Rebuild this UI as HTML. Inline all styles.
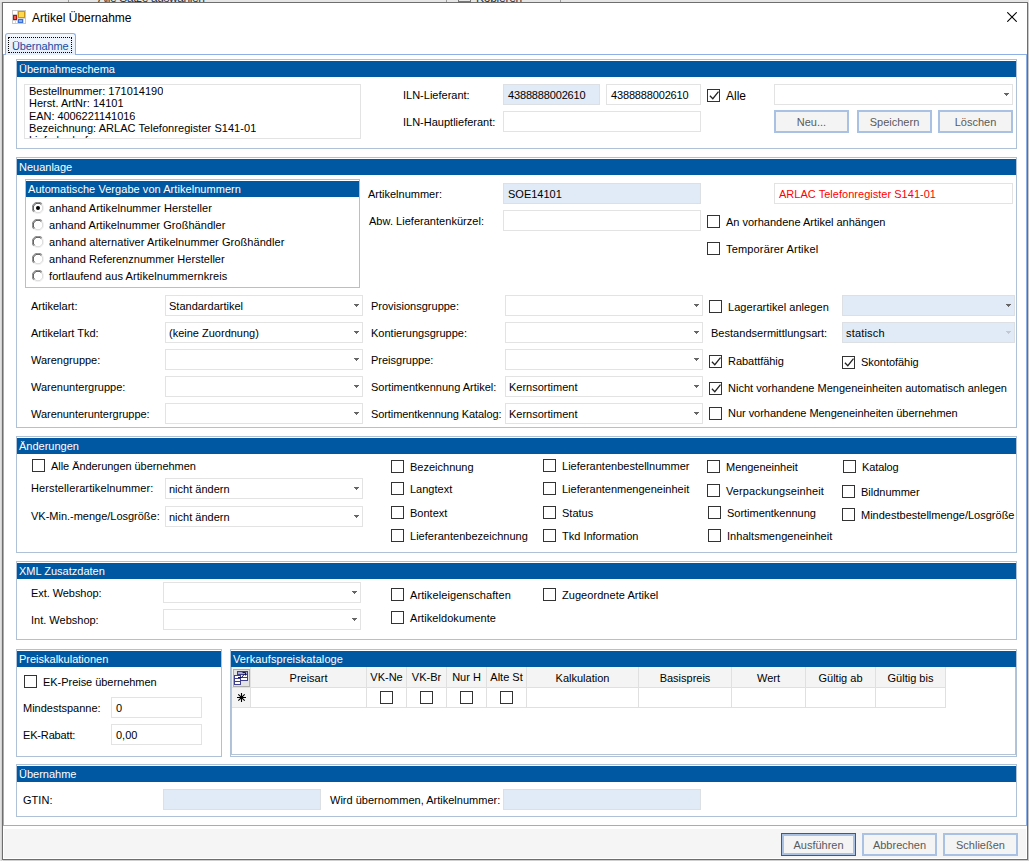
<!DOCTYPE html>
<html lang="de"><head><meta charset="utf-8"><title>Artikel Übernahme</title>
<style>
html,body{margin:0;padding:0;background:#fff;}
body{width:1029px;height:861px;position:relative;overflow:hidden;font-family:"Liberation Sans",sans-serif;font-size:11px;color:#000;}
.abs,.t,.grp,.hdr,.fld,.cb,.btn,.gh,.gc{position:absolute;box-sizing:content-box;}
.t{white-space:nowrap;font-size:11px;}
.t.w{color:#fff;}
.t.title{font-size:12px;}
.t.tabt{color:#1c4aa0;}
.grp{border:1px solid #afc1d7;background:#fff;}
.hdr{background:#0058a2;}
.fld{border:1px solid #e3e3e3;background:#fff;}
.fld.fill{background:#e1eaf7;border-color:#dcdfe4;}
.cb{border:1px solid #333;background:#fff;}
.btn{border:2px solid #a9c1e2;background:#f4f4f4;color:#5a5a5a;text-align:center;}
.btn.def{border:1px solid #565656;box-shadow:inset 0 0 0 2px #a9c1e2;padding:1px;}
.btn .bt{display:block;font-size:11px;line-height:20px;height:19px;}
.tab{border:1px solid #8fb0e6;border-bottom:none;border-radius:3px 3px 0 0;background:linear-gradient(#f3f7fd,#e4edfa);}
.gh{background:#f4f4f4;border-right:1px solid #e0e0e0;border-bottom:1px solid #e0e0e0;box-sizing:border-box;text-align:center;font-size:11px;white-space:nowrap;overflow:hidden;}
.gc{background:#fff;border-right:1px solid #e0e0e0;border-bottom:1px solid #e0e0e0;box-sizing:border-box;}
.gc.rh{background:#f4f4f4;}
</style></head>
<body>
<div class="abs" style="left:0;top:0;width:1029px;height:861px;background:#e6e6e6;overflow:hidden" id="bgw"><div class="abs" style="left:0;top:2px;width:1px;height:859px;background:#e1e1e1"></div><div class="abs" style="left:1px;top:2px;width:1px;height:859px;background:#d2d2d2"></div><div class="abs" style="left:68px;top:0;width:1px;height:2px;background:#9a9a9a"></div><div class="abs" style="left:446px;top:0;width:1px;height:2px;background:#9a9a9a"></div><div class="abs" style="left:560px;top:0;width:1px;height:2px;background:#9a9a9a"></div><div class="abs" style="left:458px;top:0;width:11px;height:1px;border:1px solid #777;border-top:none"></div></div>
<span id="t1" class="t title" style="left:98px;top:-9.5px;height:14px;line-height:14px;color:#333;letter-spacing:-0.408px;">Alle Sätze auswählen</span>
<span id="t2" class="t title" style="left:476px;top:-9.5px;height:14px;line-height:14px;color:#333;letter-spacing:-0.256px;">Kopieren</span>
<div class="abs" style="left:2px;top:2px;width:1024px;height:856px;border:1px solid #6e6e6e;background:#fff"></div>
<div class="abs" style="left:1028px;top:3px;width:1px;height:858px;background:#c8c8c8"></div>
<div class="abs" style="left:3px;top:860px;width:1026px;height:1px;background:#cfcfcf"></div>
<div class="abs" style="left:4px;top:829px;width:1022px;height:29px;background:#f5f5f5"></div>
<svg class="abs" style="left:12px;top:10px" width="14" height="14" viewBox="0 0 14 14"><rect x="0.5" y="0.5" width="13" height="13" fill="#fff" stroke="#c9c9c9"/><rect x="6" y="1" width="7" height="7" fill="#c89612"/><rect x="7" y="2" width="5" height="5" fill="#ffd84d"/><rect x="1" y="5" width="4" height="5" fill="#a51309"/><rect x="2" y="6" width="2" height="3" fill="#ec5d55"/><rect x="6" y="9" width="5" height="4" fill="#3a6fd8"/><rect x="7" y="10" width="3" height="2" fill="#86aef5"/><rect x="5" y="1" width="1" height="12" fill="#cfcfcf"/><rect x="1" y="4" width="4" height="1" fill="#cfcfcf"/><rect x="1" y="10" width="4" height="1" fill="#cfcfcf"/><rect x="6" y="8" width="7" height="1" fill="#d6d6d6"/><rect x="11" y="9" width="1" height="4" fill="#d6d6d6"/><rect x="3" y="11" width="1" height="2" fill="#d6d6d6"/></svg>
<span id="t3" class="t title" style="left:32px;top:9.5px;height:16px;line-height:16px;letter-spacing:0.007px;">Artikel Übernahme</span>
<svg class="abs" style="left:1007px;top:12px" width="10" height="10" viewBox="0 0 10 10"><path d="M0.3 0.3L9.7 9.7M9.7 0.3L0.3 9.7" stroke="#000" stroke-width="1.1"/></svg>
<div class="abs" style="left:3px;top:54px;width:1022px;height:770px;border:1px solid #8fb0e6;background:#fff"></div>
<div class="abs tab" style="left:5px;top:33px;width:69px;height:21px"></div>
<div class="abs" style="left:8px;top:37px;width:62px;height:14px;border:1px dotted #000"></div>
<span id="t4" class="t tabt" style="left:12px;top:38.5px;height:14px;line-height:14px;letter-spacing:-0.109px;">Übernahme</span>
<div class="grp" style="left:16px;top:59px;width:999px;height:88px;"></div>
<div class="hdr" style="left:17px;top:61px;width:999px;height:16px;"></div>
<span id="t5" class="t w" style="left:19px;top:62px;height:14px;line-height:14px;letter-spacing:0.000px;">Übernahmeschema</span>
<div class="fld" style="left:24px;top:84px;width:335px;height:53px;overflow:hidden"></div>
<span id="t6" class="t " style="left:29px;top:85px;height:13px;line-height:13px;letter-spacing:-0.010px;clip-path:inset(0 0 0px 0);">Bestellnummer: 171014190</span>
<span id="t7" class="t " style="left:29px;top:97px;height:13px;line-height:13px;letter-spacing:0.023px;clip-path:inset(0 0 0px 0);">Herst. ArtNr: 14101</span>
<span id="t8" class="t " style="left:29px;top:110px;height:13px;line-height:13px;letter-spacing:-0.064px;clip-path:inset(0 0 0px 0);">EAN: 4006221141016</span>
<span id="t9" class="t " style="left:29px;top:122px;height:13px;line-height:13px;letter-spacing:0.044px;clip-path:inset(0 0 0px 0);">Bezeichnung: ARLAC Telefonregister S141-01</span>
<span id="t10" class="t " style="left:29px;top:134px;height:13px;line-height:13px;clip-path:inset(0 0 9px 0);">Lieferbedarf:</span>
<span id="t11" class="t " style="left:403px;top:88px;height:14px;line-height:14px;">ILN-Lieferant:</span>
<span id="t12" class="t " style="left:403px;top:115px;height:14px;line-height:14px;">ILN-Hauptlieferant:</span>
<div class="fld fill" style="left:503px;top:84px;width:95px;height:19px;"></div>
<span id="t13" class="t " style="left:508px;top:87.5px;height:14px;line-height:14px;letter-spacing:-0.156px;">4388888002610</span>
<div class="fld" style="left:606px;top:84px;width:93px;height:19px;"></div>
<span id="t14" class="t " style="left:611px;top:87.5px;height:14px;line-height:14px;letter-spacing:-0.156px;">4388888002610</span>
<div class="fld" style="left:503px;top:111px;width:196px;height:19px;"></div>
<div class="cb" style="left:707px;top:89px;width:11px;height:11px;"><svg width="13" height="13" viewBox="0 0 13 13" style="position:absolute;left:-1px;top:-1px"><path d="M2.9 6.8 L5.8 9.7 L11.5 2.6" fill="none" stroke="#222" stroke-width="1.25"/></svg></div>
<span id="t15" class="t " style="font-size:12px;left:726px;top:88.5px;height:14px;line-height:14px;">Alle</span>
<div class="fld" style="left:774px;top:84px;width:237px;height:19px;"></div>
<svg class="abs" style="left:1004px;top:93px" width="5" height="3" viewBox="0 0 5 3"><path d="M0 0h5v1h-1v1h-1v1h-1v-1h-1v-1h-1z" fill="#666"/></svg>
<div class="btn" style="left:774px;top:110px;width:71px;height:19px;"><span class="bt">Neu...</span></div>
<div class="btn" style="left:857px;top:110px;width:71px;height:19px;"><span class="bt">Speichern</span></div>
<div class="btn" style="left:938px;top:110px;width:71px;height:19px;"><span class="bt">Löschen</span></div>
<div class="grp" style="left:16px;top:157px;width:999px;height:269px;"></div>
<div class="hdr" style="left:17px;top:159px;width:999px;height:16px;"></div>
<span id="t16" class="t w" style="left:19px;top:160px;height:14px;line-height:14px;">Neuanlage</span>
<div class="grp" style="left:25px;top:179px;width:333px;height:107px;"></div>
<div class="hdr" style="left:26px;top:181px;width:333px;height:16px;"></div>
<span id="t17" class="t w" style="left:28px;top:182px;height:14px;line-height:14px;letter-spacing:0.052px;">Automatische Vergabe von Artikelnummern</span>
<svg class="abs" style="left:31.5px;top:201.5px" width="12" height="12" viewBox="0 0 12 12"><circle cx="6" cy="6" r="5.5" fill="#fff"/><path d="M1.8 10.2 A5.6 5.6 0 0 1 10.2 1.8" fill="none" stroke="#808080" stroke-width="1"/><path d="M2.6 9.4 A4.6 4.6 0 0 1 9.4 2.6" fill="none" stroke="#404040" stroke-width="1"/><path d="M10.2 1.8 A5.6 5.6 0 0 1 1.8 10.2" fill="none" stroke="#f4f4f4" stroke-width="1"/><path d="M9.4 2.6 A4.6 4.6 0 0 1 2.6 9.4" fill="none" stroke="#d8d8d8" stroke-width="1"/><circle cx="6" cy="6" r="2" fill="#000"/></svg>
<span id="t18" class="t " style="left:49px;top:200.5px;height:14px;line-height:14px;letter-spacing:0.088px;">anhand Artikelnummer Hersteller</span>
<svg class="abs" style="left:31.5px;top:218.5px" width="12" height="12" viewBox="0 0 12 12"><circle cx="6" cy="6" r="5.5" fill="#fff"/><path d="M1.8 10.2 A5.6 5.6 0 0 1 10.2 1.8" fill="none" stroke="#808080" stroke-width="1"/><path d="M2.6 9.4 A4.6 4.6 0 0 1 9.4 2.6" fill="none" stroke="#404040" stroke-width="1"/><path d="M10.2 1.8 A5.6 5.6 0 0 1 1.8 10.2" fill="none" stroke="#f4f4f4" stroke-width="1"/><path d="M9.4 2.6 A4.6 4.6 0 0 1 2.6 9.4" fill="none" stroke="#d8d8d8" stroke-width="1"/></svg>
<span id="t19" class="t " style="left:49px;top:217.5px;height:14px;line-height:14px;letter-spacing:0.051px;">anhand Artikelnummer Großhändler</span>
<svg class="abs" style="left:31.5px;top:235.5px" width="12" height="12" viewBox="0 0 12 12"><circle cx="6" cy="6" r="5.5" fill="#fff"/><path d="M1.8 10.2 A5.6 5.6 0 0 1 10.2 1.8" fill="none" stroke="#808080" stroke-width="1"/><path d="M2.6 9.4 A4.6 4.6 0 0 1 9.4 2.6" fill="none" stroke="#404040" stroke-width="1"/><path d="M10.2 1.8 A5.6 5.6 0 0 1 1.8 10.2" fill="none" stroke="#f4f4f4" stroke-width="1"/><path d="M9.4 2.6 A4.6 4.6 0 0 1 2.6 9.4" fill="none" stroke="#d8d8d8" stroke-width="1"/></svg>
<span id="t20" class="t " style="left:49px;top:234.5px;height:14px;line-height:14px;letter-spacing:0.070px;">anhand alternativer Artikelnummer Großhändler</span>
<svg class="abs" style="left:31.5px;top:252.5px" width="12" height="12" viewBox="0 0 12 12"><circle cx="6" cy="6" r="5.5" fill="#fff"/><path d="M1.8 10.2 A5.6 5.6 0 0 1 10.2 1.8" fill="none" stroke="#808080" stroke-width="1"/><path d="M2.6 9.4 A4.6 4.6 0 0 1 9.4 2.6" fill="none" stroke="#404040" stroke-width="1"/><path d="M10.2 1.8 A5.6 5.6 0 0 1 1.8 10.2" fill="none" stroke="#f4f4f4" stroke-width="1"/><path d="M9.4 2.6 A4.6 4.6 0 0 1 2.6 9.4" fill="none" stroke="#d8d8d8" stroke-width="1"/></svg>
<span id="t21" class="t " style="left:49px;top:251.5px;height:14px;line-height:14px;letter-spacing:0.026px;">anhand Referenznummer Hersteller</span>
<svg class="abs" style="left:31.5px;top:269.5px" width="12" height="12" viewBox="0 0 12 12"><circle cx="6" cy="6" r="5.5" fill="#fff"/><path d="M1.8 10.2 A5.6 5.6 0 0 1 10.2 1.8" fill="none" stroke="#808080" stroke-width="1"/><path d="M2.6 9.4 A4.6 4.6 0 0 1 9.4 2.6" fill="none" stroke="#404040" stroke-width="1"/><path d="M10.2 1.8 A5.6 5.6 0 0 1 1.8 10.2" fill="none" stroke="#f4f4f4" stroke-width="1"/><path d="M9.4 2.6 A4.6 4.6 0 0 1 2.6 9.4" fill="none" stroke="#d8d8d8" stroke-width="1"/></svg>
<span id="t22" class="t " style="left:49px;top:268.5px;height:14px;line-height:14px;letter-spacing:0.084px;">fortlaufend aus Artikelnummernkreis</span>
<span id="t23" class="t " style="left:368px;top:187px;height:14px;line-height:14px;">Artikelnummer:</span>
<span id="t24" class="t " style="left:369px;top:214px;height:14px;line-height:14px;letter-spacing:0.028px;">Abw. Lieferantenkürzel:</span>
<div class="fld fill" style="left:503px;top:183px;width:196px;height:19px;"></div>
<span id="t25" class="t " style="left:508px;top:186.5px;height:14px;line-height:14px;">SOE14101</span>
<div class="fld" style="left:503px;top:210px;width:196px;height:19px;"></div>
<div class="fld" style="left:774px;top:183px;width:237px;height:19px;"></div>
<span id="t26" class="t " style="left:779px;top:186.5px;height:14px;line-height:14px;color:#f00;letter-spacing:0.023px;">ARLAC Telefonregister S141-01</span>
<div class="cb" style="left:707px;top:215px;width:11px;height:11px;"></div>
<span id="t27" class="t " style="left:726px;top:214.5px;height:14px;line-height:14px;letter-spacing:-0.008px;">An vorhandene Artikel anhängen</span>
<div class="cb" style="left:707px;top:242px;width:11px;height:11px;"></div>
<span id="t28" class="t " style="left:726px;top:241.5px;height:14px;line-height:14px;letter-spacing:0.169px;">Temporärer Artikel</span>
<span id="t29" class="t " style="left:31px;top:299px;height:14px;line-height:14px;">Artikelart:</span>
<div class="fld" style="left:165px;top:295px;width:196px;height:19px;"></div>
<svg class="abs" style="left:354px;top:304px" width="5" height="3" viewBox="0 0 5 3"><path d="M0 0h5v1h-1v1h-1v1h-1v-1h-1v-1h-1z" fill="#666"/></svg>
<span id="t30" class="t " style="left:169px;top:298.5px;height:14px;line-height:14px;">Standardartikel</span>
<span id="t31" class="t " style="left:371px;top:299px;height:14px;line-height:14px;">Provisionsgruppe:</span>
<div class="fld" style="left:505px;top:295px;width:196px;height:19px;"></div>
<svg class="abs" style="left:694px;top:304px" width="5" height="3" viewBox="0 0 5 3"><path d="M0 0h5v1h-1v1h-1v1h-1v-1h-1v-1h-1z" fill="#666"/></svg>
<span id="t32" class="t " style="left:31px;top:326px;height:14px;line-height:14px;">Artikelart Tkd:</span>
<div class="fld" style="left:165px;top:322px;width:196px;height:19px;"></div>
<svg class="abs" style="left:354px;top:331px" width="5" height="3" viewBox="0 0 5 3"><path d="M0 0h5v1h-1v1h-1v1h-1v-1h-1v-1h-1z" fill="#666"/></svg>
<span id="t33" class="t " style="left:169px;top:325.5px;height:14px;line-height:14px;">(keine Zuordnung)</span>
<span id="t34" class="t " style="left:371px;top:326px;height:14px;line-height:14px;">Kontierungsgruppe:</span>
<div class="fld" style="left:505px;top:322px;width:196px;height:19px;"></div>
<svg class="abs" style="left:694px;top:331px" width="5" height="3" viewBox="0 0 5 3"><path d="M0 0h5v1h-1v1h-1v1h-1v-1h-1v-1h-1z" fill="#666"/></svg>
<span id="t35" class="t " style="left:31px;top:353px;height:14px;line-height:14px;">Warengruppe:</span>
<div class="fld" style="left:165px;top:349px;width:196px;height:19px;"></div>
<svg class="abs" style="left:354px;top:358px" width="5" height="3" viewBox="0 0 5 3"><path d="M0 0h5v1h-1v1h-1v1h-1v-1h-1v-1h-1z" fill="#666"/></svg>
<span id="t36" class="t " style="left:371px;top:353px;height:14px;line-height:14px;">Preisgruppe:</span>
<div class="fld" style="left:505px;top:349px;width:196px;height:19px;"></div>
<svg class="abs" style="left:694px;top:358px" width="5" height="3" viewBox="0 0 5 3"><path d="M0 0h5v1h-1v1h-1v1h-1v-1h-1v-1h-1z" fill="#666"/></svg>
<span id="t37" class="t " style="left:31px;top:380px;height:14px;line-height:14px;">Warenuntergruppe:</span>
<div class="fld" style="left:165px;top:376px;width:196px;height:19px;"></div>
<svg class="abs" style="left:354px;top:385px" width="5" height="3" viewBox="0 0 5 3"><path d="M0 0h5v1h-1v1h-1v1h-1v-1h-1v-1h-1z" fill="#666"/></svg>
<span id="t38" class="t " style="left:371px;top:380px;height:14px;line-height:14px;letter-spacing:-0.002px;">Sortimentkennung Artikel:</span>
<div class="fld" style="left:505px;top:376px;width:196px;height:19px;"></div>
<svg class="abs" style="left:694px;top:385px" width="5" height="3" viewBox="0 0 5 3"><path d="M0 0h5v1h-1v1h-1v1h-1v-1h-1v-1h-1z" fill="#666"/></svg>
<span id="t39" class="t " style="left:509px;top:379.5px;height:14px;line-height:14px;">Kernsortiment</span>
<span id="t40" class="t " style="left:31px;top:407px;height:14px;line-height:14px;letter-spacing:-0.039px;">Warenunteruntergruppe:</span>
<div class="fld" style="left:165px;top:403px;width:196px;height:19px;"></div>
<svg class="abs" style="left:354px;top:412px" width="5" height="3" viewBox="0 0 5 3"><path d="M0 0h5v1h-1v1h-1v1h-1v-1h-1v-1h-1z" fill="#666"/></svg>
<span id="t41" class="t " style="left:371px;top:407px;height:14px;line-height:14px;letter-spacing:-0.092px;">Sortimentkennung Katalog:</span>
<div class="fld" style="left:505px;top:403px;width:196px;height:19px;"></div>
<svg class="abs" style="left:694px;top:412px" width="5" height="3" viewBox="0 0 5 3"><path d="M0 0h5v1h-1v1h-1v1h-1v-1h-1v-1h-1z" fill="#666"/></svg>
<span id="t42" class="t " style="left:509px;top:406.5px;height:14px;line-height:14px;">Kernsortiment</span>
<div class="cb" style="left:709px;top:300px;width:11px;height:11px;"></div>
<span id="t43" class="t " style="left:728px;top:299.5px;height:14px;line-height:14px;letter-spacing:0.056px;">Lagerartikel anlegen</span>
<div class="fld fill" style="left:842px;top:295px;width:171px;height:19px;"></div>
<svg class="abs" style="left:1006px;top:304px" width="5" height="3" viewBox="0 0 5 3"><path d="M0 0h5v1h-1v1h-1v1h-1v-1h-1v-1h-1z" fill="#666"/></svg>
<span id="t44" class="t " style="left:711px;top:326px;height:14px;line-height:14px;letter-spacing:0.028px;">Bestandsermittlungsart:</span>
<div class="fld fill" style="left:842px;top:322px;width:171px;height:19px;"></div>
<svg class="abs" style="left:1006px;top:331px" width="5" height="3" viewBox="0 0 5 3"><path d="M0 0h5v1h-1v1h-1v1h-1v-1h-1v-1h-1z" fill="#c3c9d3"/></svg>
<span id="t45" class="t " style="left:846px;top:325.5px;height:14px;line-height:14px;letter-spacing:0.175px;">statisch</span>
<div class="cb" style="left:709px;top:355px;width:11px;height:11px;"><svg width="13" height="13" viewBox="0 0 13 13" style="position:absolute;left:-1px;top:-1px"><path d="M2.9 6.8 L5.8 9.7 L11.5 2.6" fill="none" stroke="#222" stroke-width="1.25"/></svg></div>
<span id="t46" class="t " style="left:728px;top:353.5px;height:14px;line-height:14px;letter-spacing:-0.042px;">Rabattfähig</span>
<div class="cb" style="left:842px;top:356px;width:11px;height:11px;"><svg width="13" height="13" viewBox="0 0 13 13" style="position:absolute;left:-1px;top:-1px"><path d="M2.9 6.8 L5.8 9.7 L11.5 2.6" fill="none" stroke="#222" stroke-width="1.25"/></svg></div>
<span id="t47" class="t " style="left:861px;top:354.5px;height:14px;line-height:14px;letter-spacing:-0.037px;">Skontofähig</span>
<div class="cb" style="left:709px;top:382px;width:11px;height:11px;"><svg width="13" height="13" viewBox="0 0 13 13" style="position:absolute;left:-1px;top:-1px"><path d="M2.9 6.8 L5.8 9.7 L11.5 2.6" fill="none" stroke="#222" stroke-width="1.25"/></svg></div>
<span id="t48" class="t " style="left:728px;top:380.5px;height:14px;line-height:14px;letter-spacing:0.014px;">Nicht vorhandene Mengeneinheiten automatisch anlegen</span>
<div class="cb" style="left:709px;top:407px;width:11px;height:11px;"></div>
<span id="t49" class="t " style="left:728px;top:405.5px;height:14px;line-height:14px;letter-spacing:-0.036px;">Nur vorhandene Mengeneinheiten übernehmen</span>
<div class="grp" style="left:16px;top:436px;width:999px;height:115px;"></div>
<div class="hdr" style="left:17px;top:438px;width:999px;height:16px;"></div>
<span id="t50" class="t w" style="left:19px;top:439px;height:14px;line-height:14px;">Änderungen</span>
<div class="cb" style="left:32px;top:459px;width:11px;height:11px;"></div>
<span id="t51" class="t " style="left:51px;top:458.5px;height:14px;line-height:14px;letter-spacing:-0.053px;">Alle Änderungen übernehmen</span>
<span id="t52" class="t " style="left:31px;top:481px;height:14px;line-height:14px;letter-spacing:0.108px;">Herstellerartikelnummer:</span>
<div class="fld" style="left:165px;top:478px;width:196px;height:19px;"></div>
<svg class="abs" style="left:354px;top:487px" width="5" height="3" viewBox="0 0 5 3"><path d="M0 0h5v1h-1v1h-1v1h-1v-1h-1v-1h-1z" fill="#666"/></svg>
<span id="t53" class="t " style="left:169px;top:481.5px;height:14px;line-height:14px;">nicht ändern</span>
<span id="t54" class="t " style="left:31px;top:509px;height:14px;line-height:14px;letter-spacing:-0.013px;">VK-Min.-menge/Losgröße:</span>
<div class="fld" style="left:165px;top:506px;width:196px;height:19px;"></div>
<svg class="abs" style="left:354px;top:515px" width="5" height="3" viewBox="0 0 5 3"><path d="M0 0h5v1h-1v1h-1v1h-1v-1h-1v-1h-1z" fill="#666"/></svg>
<span id="t55" class="t " style="left:169px;top:509.5px;height:14px;line-height:14px;">nicht ändern</span>
<div class="cb" style="left:391px;top:460px;width:11px;height:11px;"></div>
<span id="t56" class="t " style="left:410px;top:459.5px;height:14px;line-height:14px;">Bezeichnung</span>
<div class="cb" style="left:391px;top:482px;width:11px;height:11px;"></div>
<span id="t57" class="t " style="left:410px;top:481.5px;height:14px;line-height:14px;">Langtext</span>
<div class="cb" style="left:391px;top:506px;width:11px;height:11px;"></div>
<span id="t58" class="t " style="left:410px;top:505.5px;height:14px;line-height:14px;">Bontext</span>
<div class="cb" style="left:391px;top:529px;width:11px;height:11px;"></div>
<span id="t59" class="t " style="left:410px;top:528.5px;height:14px;line-height:14px;letter-spacing:0.021px;">Lieferantenbezeichnung</span>
<div class="cb" style="left:543px;top:459px;width:11px;height:11px;"></div>
<span id="t60" class="t " style="left:562px;top:458.5px;height:14px;line-height:14px;letter-spacing:0.013px;">Lieferantenbestellnummer</span>
<div class="cb" style="left:543px;top:482px;width:11px;height:11px;"></div>
<span id="t61" class="t " style="left:562px;top:481.5px;height:14px;line-height:14px;">Lieferantenmengeneinheit</span>
<div class="cb" style="left:543px;top:506px;width:11px;height:11px;"></div>
<span id="t62" class="t " style="left:562px;top:505.5px;height:14px;line-height:14px;">Status</span>
<div class="cb" style="left:543px;top:529px;width:11px;height:11px;"></div>
<span id="t63" class="t " style="left:562px;top:528.5px;height:14px;line-height:14px;">Tkd Information</span>
<div class="cb" style="left:707px;top:460px;width:11px;height:11px;"></div>
<span id="t64" class="t " style="left:726px;top:459.5px;height:14px;line-height:14px;letter-spacing:-0.036px;">Mengeneinheit</span>
<div class="cb" style="left:707px;top:484px;width:11px;height:11px;"></div>
<span id="t65" class="t " style="left:726px;top:483.5px;height:14px;line-height:14px;letter-spacing:0.110px;">Verpackungseinheit</span>
<div class="cb" style="left:708px;top:506px;width:11px;height:11px;"></div>
<span id="t66" class="t " style="left:727px;top:505.5px;height:14px;line-height:14px;letter-spacing:-0.024px;">Sortimentkennung</span>
<div class="cb" style="left:708px;top:529px;width:11px;height:11px;"></div>
<span id="t67" class="t " style="left:727px;top:528.5px;height:14px;line-height:14px;letter-spacing:0.036px;">Inhaltsmengeneinheit</span>
<div class="cb" style="left:843px;top:460px;width:11px;height:11px;"></div>
<span id="t68" class="t " style="left:862px;top:459.5px;height:14px;line-height:14px;letter-spacing:-0.102px;">Katalog</span>
<div class="cb" style="left:842px;top:485px;width:11px;height:11px;"></div>
<span id="t69" class="t " style="left:861px;top:484.5px;height:14px;line-height:14px;letter-spacing:-0.009px;">Bildnummer</span>
<div class="cb" style="left:842px;top:508px;width:11px;height:11px;"></div>
<span id="t70" class="t " style="left:861px;top:507.5px;height:14px;line-height:14px;width:155px;overflow:hidden;">Mindestbestellmenge/Losgröße</span>
<div class="grp" style="left:16px;top:561px;width:999px;height:77px;"></div>
<div class="hdr" style="left:17px;top:563px;width:999px;height:16px;"></div>
<span id="t71" class="t w" style="left:19px;top:564px;height:14px;line-height:14px;">XML Zusatzdaten</span>
<span id="t72" class="t " style="left:31px;top:585.5px;height:14px;line-height:14px;letter-spacing:-0.065px;">Ext. Webshop:</span>
<div class="fld" style="left:163px;top:582px;width:196px;height:19px;"></div>
<svg class="abs" style="left:352px;top:591px" width="5" height="3" viewBox="0 0 5 3"><path d="M0 0h5v1h-1v1h-1v1h-1v-1h-1v-1h-1z" fill="#666"/></svg>
<span id="t73" class="t " style="left:31px;top:612.5px;height:14px;line-height:14px;">Int. Webshop:</span>
<div class="fld" style="left:163px;top:609px;width:196px;height:19px;"></div>
<svg class="abs" style="left:352px;top:618px" width="5" height="3" viewBox="0 0 5 3"><path d="M0 0h5v1h-1v1h-1v1h-1v-1h-1v-1h-1z" fill="#666"/></svg>
<div class="cb" style="left:391px;top:588px;width:11px;height:11px;"></div>
<span id="t74" class="t " style="left:410px;top:587.5px;height:14px;line-height:14px;letter-spacing:0.092px;">Artikeleigenschaften</span>
<div class="cb" style="left:391px;top:611px;width:11px;height:11px;"></div>
<span id="t75" class="t " style="left:410px;top:610.5px;height:14px;line-height:14px;letter-spacing:0.062px;">Artikeldokumente</span>
<div class="cb" style="left:543px;top:588px;width:11px;height:11px;"></div>
<span id="t76" class="t " style="left:562px;top:587.5px;height:14px;line-height:14px;letter-spacing:0.048px;">Zugeordnete Artikel</span>
<div class="grp" style="left:16px;top:649px;width:204px;height:106px;"></div>
<div class="hdr" style="left:17px;top:651px;width:204px;height:16px;"></div>
<span id="t77" class="t w" style="left:19px;top:652px;height:14px;line-height:14px;">Preiskalkulationen</span>
<div class="cb" style="left:24px;top:675px;width:11px;height:11px;"></div>
<span id="t78" class="t " style="left:43px;top:674.5px;height:14px;line-height:14px;letter-spacing:-0.037px;">EK-Preise übernehmen</span>
<span id="t79" class="t " style="left:23px;top:701px;height:14px;line-height:14px;letter-spacing:-0.005px;">Mindestspanne:</span>
<div class="fld" style="left:111px;top:697px;width:89px;height:19px;"></div>
<span id="t80" class="t " style="left:116px;top:700.5px;height:14px;line-height:14px;">0</span>
<span id="t81" class="t " style="left:23px;top:728px;height:14px;line-height:14px;letter-spacing:-0.161px;">EK-Rabatt:</span>
<div class="fld" style="left:111px;top:724px;width:89px;height:19px;"></div>
<span id="t82" class="t " style="left:116px;top:727.5px;height:14px;line-height:14px;">0,00</span>
<div class="grp" style="left:230px;top:649px;width:785px;height:106px;"></div>
<div class="hdr" style="left:231px;top:651px;width:785px;height:16px;"></div>
<span id="t83" class="t w" style="left:233px;top:652px;height:14px;line-height:14px;letter-spacing:0.084px;">Verkaufspreiskataloge</span>
<div class="abs" style="left:231px;top:667px;width:783px;height:87px;border:1px solid #b4c3d6;border-top:none"></div>
<div class="gh" style="left:232px;top:667px;width:19px;height:21px;line-height:22px"></div>
<div class="gc rh" style="left:232px;top:688px;width:19px;height:20px"></div>
<div class="gh" style="left:251px;top:667px;width:116px;height:21px;line-height:22px">Preisart</div>
<div class="gc" style="left:251px;top:688px;width:116px;height:20px"></div>
<div class="gh" style="left:367px;top:667px;width:40px;height:21px;line-height:20px">VK-Ne</div>
<div class="gc" style="left:367px;top:688px;width:40px;height:20px"></div>
<div class="gh" style="left:407px;top:667px;width:40px;height:21px;line-height:20px">VK-Br</div>
<div class="gc" style="left:407px;top:688px;width:40px;height:20px"></div>
<div class="gh" style="left:447px;top:667px;width:40px;height:21px;line-height:20px">Nur H</div>
<div class="gc" style="left:447px;top:688px;width:40px;height:20px"></div>
<div class="gh" style="left:487px;top:667px;width:40px;height:21px;line-height:20px">Alte St</div>
<div class="gc" style="left:487px;top:688px;width:40px;height:20px"></div>
<div class="gh" style="left:527px;top:667px;width:112px;height:21px;line-height:22px">Kalkulation</div>
<div class="gc" style="left:527px;top:688px;width:112px;height:20px"></div>
<div class="gh" style="left:639px;top:667px;width:93px;height:21px;line-height:22px">Basispreis</div>
<div class="gc" style="left:639px;top:688px;width:93px;height:20px"></div>
<div class="gh" style="left:732px;top:667px;width:74px;height:21px;line-height:22px">Wert</div>
<div class="gc" style="left:732px;top:688px;width:74px;height:20px"></div>
<div class="gh" style="left:806px;top:667px;width:70px;height:21px;line-height:22px">Gültig ab</div>
<div class="gc" style="left:806px;top:688px;width:70px;height:20px"></div>
<div class="gh" style="left:876px;top:667px;width:70px;height:21px;line-height:22px">Gültig bis</div>
<div class="gc" style="left:876px;top:688px;width:70px;height:20px"></div>
<div class="cb" style="left:380px;top:691px;width:11px;height:11px;"></div>
<div class="cb" style="left:420px;top:691px;width:11px;height:11px;"></div>
<div class="cb" style="left:460px;top:691px;width:11px;height:11px;"></div>
<div class="cb" style="left:500px;top:691px;width:11px;height:11px;"></div>
<svg class="abs" style="left:233px;top:669px" width="17" height="18" viewBox="0 0 17 18" shape-rendering="crispEdges"><rect x="0.5" y="0.5" width="16" height="17" fill="#e3e3e3" stroke="#adadad"/><rect x="4" y="2" width="11" height="10" fill="#3f3f91"/><rect x="5" y="3" width="9" height="2" fill="#a9a9d6"/><rect x="5" y="6" width="9" height="2" fill="#fff"/><rect x="5" y="9" width="9" height="2" fill="#fff"/><rect x="1" y="6" width="7" height="10" fill="#3f3f91"/><rect x="2" y="7" width="5" height="2" fill="#fff"/><rect x="2" y="10" width="5" height="2" fill="#fff"/><rect x="2" y="13" width="5" height="2" fill="#fff"/><path d="M5 8.5h3.5l3-3.5" fill="none" stroke="#15153a" stroke-width="1" shape-rendering="auto"/><path d="M9.5 3.5h3v3" fill="none" stroke="#15153a" stroke-width="1" shape-rendering="auto"/></svg>
<svg class="abs" style="left:236px;top:692px" width="11" height="11" viewBox="0 0 11 11"><path d="M5.5 1v9M1 5.5h9M2.3 2.3l6.4 6.4M8.7 2.3l-6.4 6.4" stroke="#000" stroke-width="1.1" fill="none"/><rect x="4.3" y="4.3" width="2.4" height="2.4" fill="#000"/></svg>
<div class="grp" style="left:16px;top:764px;width:999px;height:51px;"></div>
<div class="hdr" style="left:17px;top:766px;width:999px;height:16px;"></div>
<span id="t84" class="t w" style="left:19px;top:767px;height:14px;line-height:14px;">Übernahme</span>
<span id="t85" class="t " style="left:23px;top:793px;height:14px;line-height:14px;letter-spacing:0.031px;">GTIN:</span>
<div class="fld fill" style="left:163px;top:789px;width:156px;height:19px;"></div>
<span id="t86" class="t " style="left:330px;top:793px;height:14px;line-height:14px;letter-spacing:0.011px;">Wird übernommen, Artikelnummer:</span>
<div class="fld fill" style="left:503px;top:789px;width:196px;height:19px;"></div>
<div class="btn def" style="left:781px;top:833px;width:71px;height:19px;"><span class="bt">Ausführen</span></div>
<div class="btn" style="left:862px;top:833px;width:71px;height:19px;"><span class="bt">Abbrechen</span></div>
<div class="btn" style="left:943px;top:833px;width:71px;height:19px;"><span class="bt">Schließen</span></div>
</body></html>
